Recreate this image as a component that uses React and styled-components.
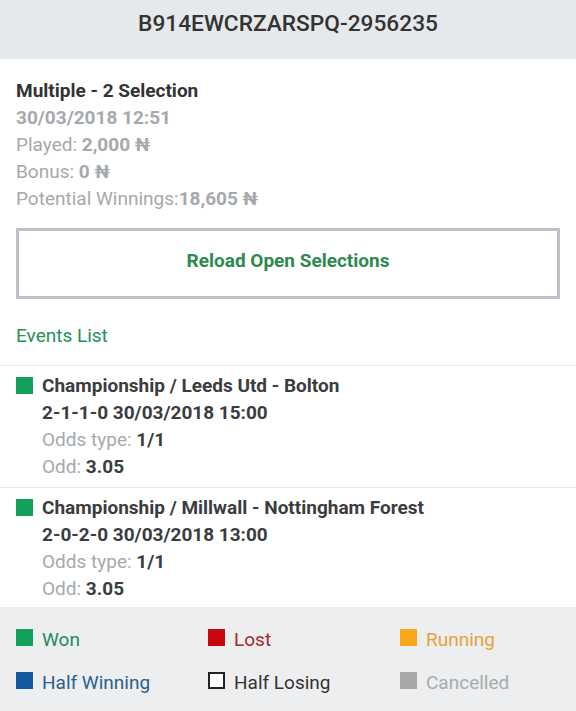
import styled, { createGlobalStyle } from 'styled-components';

const GlobalStyle = createGlobalStyle`
  body {
    margin: 0;
    background: #fff;
    font-family: Roboto, "Liberation Sans", sans-serif;
  }
`;

const Page = styled.div`
  width: 576px;
  min-height: 711px;
  display: flex;
  flex-direction: column;
  background: #fff;
`;

const Header = styled.div`
  height: 59px;
  padding-bottom: 13px;
  box-sizing: border-box;
  background: #e6e9eb;
  display: flex;
  align-items: center;
  justify-content: center;
  font-size: 22.7px;
  font-weight: 500;
  color: #333;
`;

const Summary = styled.div`
  padding: 18px 16px 0;
  display: flex;
  flex-direction: column;
  font-size: 19px;
  line-height: 27px;
  color: #a5a9ad;
`;

const Title = styled.div`
  font-weight: 700;
  color: #333;
`;

const DateLine = styled.div`
  font-weight: 700;
`;

const Strong = styled.b`
  font-weight: 700;
  color: ${(p) => p.color || 'inherit'};
`;

const ReloadButton = styled.button`
  margin: 16px 16px 0;
  height: 71px;
  padding: 0 0 6px;
  border: 3px solid #bcc2c7;
  background: #fff;
  color: #2d8a4e;
  font-family: inherit;
  font-size: 19px;
  font-weight: 700;
`;

const SectionLabel = styled.div`
  padding: 23px 16px 16px;
  font-size: 19px;
  line-height: 27px;
  color: #22915a;
  border-bottom: 1px solid #e6e8ea;
`;

const Event = styled.div`
  padding: 6px 16px ${(p) => (p.last ? 5 : 7)}px;
  display: flex;
  gap: 9px;
  border-bottom: ${(p) => (p.last ? 'none' : '1px solid #e6e8ea')};
  font-size: 19px;
  line-height: 27px;
`;

const Square = styled.span`
  flex: none;
  box-sizing: border-box;
  width: 17px;
  height: 17px;
  margin-top: ${(p) => p.top}px;
  background: ${(p) => p.color};
  border: ${(p) => (p.outline ? '2px solid #222' : 'none')};
`;

const EventBody = styled.div`
  display: flex;
  flex-direction: column;
  color: #a5a9ad;
`;

const EventLine = styled.div`
  font-weight: 700;
  color: #3a3d40;
`;

const Legend = styled.div`
  flex: 1;
  background: #eceef0;
  padding: 19px 16px 0;
  display: grid;
  grid-template-columns: 192px 192px 1fr;
  align-content: start;
  row-gap: 16px;
  font-size: 19px;
  line-height: 27px;
`;

const LegendItem = styled.div`
  display: flex;
  gap: 9px;
  color: ${(p) => p.color};
`;

const legend = [
  { label: 'Won', square: '#12a05a', text: '#1f8a5c' },
  { label: 'Lost', square: '#c8080e', text: '#a7272c' },
  { label: 'Running', square: '#f8a81a', text: '#e6a43a' },
  { label: 'Half Winning', square: '#1458a0', text: '#2a5f8c' },
  { label: 'Half Losing', square: '#fff', text: '#333', outline: true },
  { label: 'Cancelled', square: '#a8a8a8', text: '#a8abae' },
];

const events = [
  {
    title: 'Championship / Leeds Utd - Bolton',
    info: '2-1-1-0 30/03/2018 15:00',
  },
  {
    title: 'Championship / Millwall - Nottingham Forest',
    info: '2-0-2-0 30/03/2018 13:00',
  },
];

export default function App() {
  return (
    <Page>
      <GlobalStyle />
      <Header>B914EWCRZARSPQ-2956235</Header>
      <Summary>
        <Title>Multiple - 2 Selection</Title>
        <DateLine>30/03/2018 12:51</DateLine>
        <div>
          Played: <Strong>2,000 ₦</Strong>
        </div>
        <div>
          Bonus: <Strong>0 ₦</Strong>
        </div>
        <div>
          Potential Winnings:<Strong>18,605 ₦</Strong>
        </div>
      </Summary>
      <ReloadButton>Reload Open Selections</ReloadButton>
      <SectionLabel>Events List</SectionLabel>
      {events.map((ev, i) => (
        <Event key={ev.title} last={i === events.length - 1}>
          <Square color="#12a05a" top={5} />
          <EventBody>
            <EventLine>{ev.title}</EventLine>
            <EventLine>{ev.info}</EventLine>
            <div>
              Odds type: <Strong color="#3a3d40">1/1</Strong>
            </div>
            <div>
              Odd: <Strong color="#3a3d40">3.05</Strong>
            </div>
          </EventBody>
        </Event>
      ))}
      <Legend>
        {legend.map((l) => (
          <LegendItem key={l.label} color={l.text}>
            <Square color={l.square} outline={l.outline} top={3} />
            {l.label}
          </LegendItem>
        ))}
      </Legend>
    </Page>
  );
}
